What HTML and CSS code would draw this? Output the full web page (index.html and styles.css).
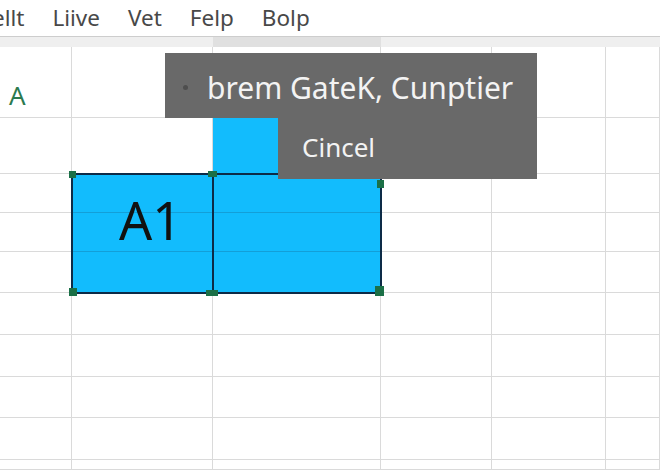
FILE: index.html
```html
<!DOCTYPE html>
<html>
<head>
<meta charset="utf-8">
<link rel="stylesheet" href="styles.css">
</head>
<body>
<div class="menubar">
  <span class="menu-item first">ellt</span>
  <span class="menu-item">Liive</span>
  <span class="menu-item">Vet</span>
  <span class="menu-item">Felp</span>
  <span class="menu-item">Bolp</span>
</div>
<div class="band">
  <div></div><div></div><div class="band-sel"></div><div></div><div></div><div></div>
</div>
<div class="sheet">
  <!-- row 1 -->
  <div class="cell colhead">A</div><div class="cell"></div><div class="cell"></div><div class="cell"></div><div class="cell"></div><div class="cell"></div>
  <!-- row 2 -->
  <div class="cell"></div><div class="cell"></div><div class="cell blue"></div><div class="cell"></div><div class="cell"></div><div class="cell"></div>
  <!-- rows 3-10 -->
  <div class="cell"></div><div class="cell"></div><div class="cell"></div><div class="cell"></div><div class="cell"></div><div class="cell"></div>
  <div class="cell"></div><div class="cell"></div><div class="cell"></div><div class="cell"></div><div class="cell"></div><div class="cell"></div>
  <div class="cell"></div><div class="cell"></div><div class="cell"></div><div class="cell"></div><div class="cell"></div><div class="cell"></div>
  <div class="cell"></div><div class="cell"></div><div class="cell"></div><div class="cell"></div><div class="cell"></div><div class="cell"></div>
  <div class="cell"></div><div class="cell"></div><div class="cell"></div><div class="cell"></div><div class="cell"></div><div class="cell"></div>
  <div class="cell"></div><div class="cell"></div><div class="cell"></div><div class="cell"></div><div class="cell"></div><div class="cell"></div>
  <div class="cell"></div><div class="cell"></div><div class="cell"></div><div class="cell"></div><div class="cell"></div><div class="cell"></div>
  <div class="cell"></div><div class="cell"></div><div class="cell"></div><div class="cell"></div><div class="cell"></div><div class="cell"></div>

  <div class="selection">
    <div class="sel-left"><span class="a1">A1</span></div>
    <div class="sel-right"></div>
    <span class="handle h-tl"></span>
    <span class="handle h-tm"></span>
    <span class="handle h-tr"></span>
    <span class="handle h-bl"></span>
    <span class="handle h-bm"></span>
    <span class="handle h-br"></span>
  </div>
</div>

<div class="tip">
  <div class="tip-main"><span class="tip-dot"></span><span class="tip-text">brem GateK, Cunptier</span></div>
  <div class="tip-sub">Cincel</div>
</div>
</body>
</html>
```
FILE: styles.css
```css
html, body {
  margin: 0;
  padding: 0;
}
body {
  width: 660px;
  height: 470px;
  overflow: hidden;
  background: #ffffff;
  font-family: "Noto Sans", "Open Sans", sans-serif;
  position: relative;
}
.menubar {
  height: 36px;
  display: flex;
  align-items: center;
  gap: 28px;
  border-bottom: 1px solid #cdcdcd;
  white-space: nowrap;
  overflow: hidden;
}
.menu-item {
  font-size: 22.5px;
  color: #484848;
  line-height: 36px;
}
.menu-item.first {
  margin-left: -8px;
}
.band {
  height: 10px;
  display: grid;
  grid-template-columns: 72px 141px 168px 111px 114px 1fr;
  background: #efefef;
}
.band-sel {
  background: #e0e0e0;
}
.sheet {
  display: grid;
  grid-template-columns: 72px 141px 168px 111px 114px 1fr;
  grid-template-rows: 71px 56px 39px 39px 41px 42px 42px 41px 42px 10px;
  position: relative;
}
.cell {
  box-sizing: border-box;
  border-right: 1px solid #dadada;
  border-bottom: 1px solid #dadada;
}
.colhead {
  color: #2b7a4f;
  font-size: 26px;
  line-height: 26px;
  padding-top: 35px;
  padding-left: 9px;
}
.blue {
  background: #12bcfd;
}
.selection {
  grid-column: 2 / 4;
  grid-row: 3 / 6;
  margin: -1px -1px -1px -1px;
  position: relative;
  display: flex;
  border: 2px solid #0d2b47;
  background-color: #12bcfd;
  background-image:
    linear-gradient(#139fd8, #139fd8),
    linear-gradient(#139fd8, #139fd8);
  background-size: 100% 1px, 100% 1px;
  background-position: 0 37px, 0 76px;
  background-repeat: no-repeat;
}
.sel-left {
  width: 141px;
  border-right: 2px solid #0d2b47;
  box-sizing: border-box;
  padding-top: 19px;
  padding-left: 46px;
}
.sel-right {
  flex: 1;
}
.a1 {
  display: block;
  font-size: 52px;
  line-height: 52px;
  color: #111111;
}
.handle {
  position: absolute;
  width: 7px;
  height: 7px;
  background: #1b7047;
}
.h-tl { left: -4px; top: -4px; }
.h-tm { left: 135px; top: -4px; width: 9px; height: 6px; }
.h-tr { right: -4px; top: 5px; height: 8px; }
.h-bl { left: -4px; bottom: -4px; width: 8px; height: 8px; }
.h-bm { left: 133px; bottom: -4px; width: 12px; height: 6px; }
.h-br { right: -4px; bottom: -4px; width: 9px; height: 10px; }

.tip {
  position: absolute;
  left: 165px;
  top: 53px;
  width: 372px;
}
.tip-main {
  height: 65px;
  background: #696969;
  display: flex;
  align-items: center;
  padding-left: 18px;
}
.tip-dot {
  width: 5px;
  height: 5px;
  border-radius: 50%;
  background: #4e4e4e;
  margin-right: 19px;
  margin-top: 4px;
}
.tip-text {
  font-size: 30px;
  line-height: 30px;
  color: #f3f3f3;
  margin-top: 4px;
}
.tip-sub {
  margin-left: 113px;
  height: 61px;
  background: #696969;
  color: #f3f3f3;
  font-size: 26px;
  line-height: 26px;
  padding-left: 24px;
  padding-top: 16px;
  box-sizing: border-box;
}
```
